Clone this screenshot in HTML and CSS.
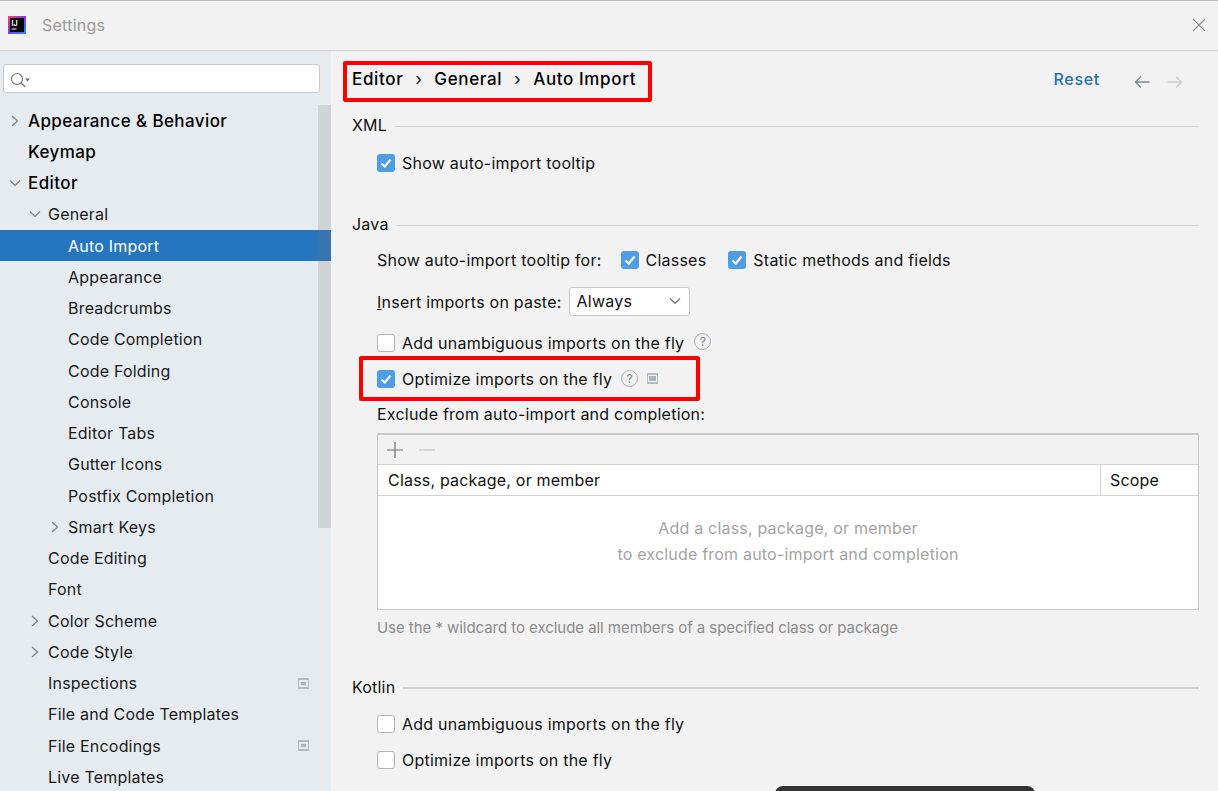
FILE: index.html
```html
<!DOCTYPE html>
<html lang="en">
  <head>
    <title> Settings </title>
    <meta charset="utf-8">
    <link rel="stylesheet" href="styles.css">
  </head>

  <body>
    <div class="window">
      <header class="titlebar">
        <svg class="logo" width="18" height="18" viewBox="0 0 18 18">
          <defs>
            <linearGradient id="frame" x1="0" y1="0" x2="1" y2="1">
              <stop offset="0" stop-color="#ff3d6e"/>
              <stop offset="0.5" stop-color="#7b3fe4"/>
              <stop offset="1" stop-color="#1f8fff"/>
            </linearGradient>
          </defs>
          <rect width="18" height="18" fill="url(#frame)"/>
          <rect x="2" y="2" width="14" height="14" fill="#000"/>
          <text x="3.5" y="9.5" class="logo-text">IJ</text>
          <rect x="3.5" y="12.5" width="5" height="1" fill="#fff"/>
        </svg>
        <span class="window-title">Settings</span>
        <svg class="close" width="14" height="14" viewBox="0 0 14 14">
          <path d="M1 1 L13 13 M13 1 L1 13" stroke="#8c8c8c" stroke-width="1.1" fill="none"/>
        </svg>
      </header>

      <div class="content">
        <aside class="sidebar">
          <div class="search">
            <svg width="22" height="16" viewBox="0 0 22 16">
              <circle cx="7" cy="8" r="5.5" stroke="#6e6e6e" stroke-width="1.1" fill="none"/>
              <path d="M11 12 L15.5 16" stroke="#6e6e6e" stroke-width="1.3"/>
              <path d="M15 7.5 L20 7.5 L17.5 10.5 Z" fill="#6e6e6e"/>
            </svg>
          </div>
          <div class="tree-wrap">
            <ul class="tree">
              <li class="row strong lvl0"><svg class="arrow" width="10" height="12" viewBox="0 0 10 12"><path d="M3 1 L8.5 6 L3 11" /></svg>Appearance &amp; Behavior</li>
              <li class="row strong lvl0">Keymap</li>
              <li class="row strong lvl0"><svg class="arrow" width="12" height="10" viewBox="0 0 12 10"><path d="M1 2.5 L6 7.5 L11 2.5" /></svg>Editor</li>
              <li class="row lvl1"><svg class="arrow" width="12" height="10" viewBox="0 0 12 10"><path d="M1 2.5 L6 7.5 L11 2.5" /></svg>General</li>
              <li class="row lvl2 selected">Auto Import</li>
              <li class="row lvl2">Appearance</li>
              <li class="row lvl2">Breadcrumbs</li>
              <li class="row lvl2">Code Completion</li>
              <li class="row lvl2">Code Folding</li>
              <li class="row lvl2">Console</li>
              <li class="row lvl2">Editor Tabs</li>
              <li class="row lvl2">Gutter Icons</li>
              <li class="row lvl2">Postfix Completion</li>
              <li class="row lvl2"><svg class="arrow" width="10" height="12" viewBox="0 0 10 12"><path d="M3 1 L8.5 6 L3 11" /></svg>Smart Keys</li>
              <li class="row lvl1">Code Editing</li>
              <li class="row lvl1">Font</li>
              <li class="row lvl1"><svg class="arrow" width="10" height="12" viewBox="0 0 10 12"><path d="M3 1 L8.5 6 L3 11" /></svg>Color Scheme</li>
              <li class="row lvl1"><svg class="arrow" width="10" height="12" viewBox="0 0 10 12"><path d="M3 1 L8.5 6 L3 11" /></svg>Code Style</li>
              <li class="row lvl1">Inspections<span class="scope-icon tree-scope"></span></li>
              <li class="row lvl1">File and Code Templates</li>
              <li class="row lvl1">File Encodings<span class="scope-icon tree-scope"></span></li>
              <li class="row lvl1">Live Templates</li>
            </ul>
            <div class="scrollbar"></div>
          </div>
        </aside>

        <main class="main">
          <div class="page-head">
            <div class="crumbs">
              <span>Editor</span><span class="sep">›</span><span>General</span><span class="sep">›</span><span>Auto Import</span>
            </div>
            <a class="reset">Reset</a>
            <svg class="nav" width="16" height="14" viewBox="0 0 16 14">
              <path d="M15.5 7 H1.5 M7 1.5 L1.5 7 L7 12.5" stroke="#7f8b91" stroke-width="1.4" fill="none"/>
            </svg>
            <svg class="nav" width="16" height="14" viewBox="0 0 16 14">
              <path d="M0.5 7 H14.5 M9 1.5 L14.5 7 L9 12.5" stroke="#c9cccf" stroke-width="1.4" fill="none"/>
            </svg>
          </div>

          <div class="section-title sec-xml"><span>XML</span><i></i></div>
          <div class="opt opt-xml">
            <span class="check on"><svg width="18" height="18" viewBox="0 0 18 18"><path d="M4.5 9.5 L7.8 12.5 L13.5 5.5"/></svg></span>
            <span>Show auto-import tooltip</span>
          </div>

          <div class="section-title sec-java"><span>Java</span><i></i></div>
          <div class="opt opt-for">
            <span class="for-label">Show auto-import tooltip for:</span>
            <span class="check on"><svg width="18" height="18" viewBox="0 0 18 18"><path d="M4.5 9.5 L7.8 12.5 L13.5 5.5"/></svg></span>
            <span class="for-item">Classes</span>
            <span class="check on"><svg width="18" height="18" viewBox="0 0 18 18"><path d="M4.5 9.5 L7.8 12.5 L13.5 5.5"/></svg></span>
            <span>Static methods and fields</span>
          </div>
          <div class="opt opt-paste">
            <span><u>I</u>nsert imports on paste:</span>
            <span class="select"><span>Always</span>
              <svg width="12" height="8" viewBox="0 0 12 8"><path d="M1 1.5 L6 6.5 L11 1.5" stroke="#6e6e6e" stroke-width="1.1" fill="none"/></svg>
            </span>
          </div>
          <div class="opt opt-add">
            <span class="check"></span>
            <span>Add unambiguous imports on the fly</span>
            <span class="help help-add">?</span>
          </div>
          <div class="opt opt-optimize">
            <span class="check on"><svg width="18" height="18" viewBox="0 0 18 18"><path d="M4.5 9.5 L7.8 12.5 L13.5 5.5"/></svg></span>
            <span>Optimize imports on the fly</span>
            <span class="help help-opt">?</span>
            <span class="scope-icon"></span>
            <div class="mark"></div>
          </div>
          <div class="opt opt-exclude">Exclude from auto-import and completion:</div>

          <div class="table">
            <div class="table-tools">
              <svg width="16" height="16" viewBox="0 0 16 16"><path d="M8 0 V16 M0 8 H16" stroke="#6e6e6e" stroke-width="1.2"/></svg>
              <svg width="16" height="16" viewBox="0 0 16 16"><path d="M0 8 H16" stroke="#c4c4c4" stroke-width="1.2"/></svg>
            </div>
            <div class="table-head">
              <div class="col-main">Class, package, or member</div>
              <div class="col-scope">Scope</div>
            </div>
            <div class="table-empty">
              <div>Add a class, package, or member</div>
              <div>to exclude from auto-import and completion</div>
            </div>
          </div>
          <div class="hint">Use the * wildcard to exclude all members of a specified class or package</div>

          <div class="section-title sec-kotlin"><span>Kotlin</span><i></i></div>
          <div class="opt opt-k1"><span class="check"></span><span>Add unambiguous imports on the fly</span></div>
          <div class="opt opt-k2"><span class="check"></span><span>Optimize imports on the fly</span></div>
        </main>
      </div>
      <div class="dark-tab"></div>
    </div>
  </body>
</html>
```

FILE: styles.css
```css
html, body {
  margin: 0;
  height: 100%;
  overflow: hidden;
}
body {
  font-family: "Inter", "Liberation Sans", sans-serif;
  font-size: 16px;
  color: #111;
  background: #f2f2f2;
}
.window {
  height: 791px;
  display: flex;
  flex-direction: column;
  overflow: hidden;
  border-top: 1px solid #bdbdbd;
  box-sizing: border-box;
}

/* title bar */
.titlebar {
  height: 50px;
  box-sizing: border-box;
  flex: none;
  display: flex;
  align-items: center;
  padding: 0 12px 2px 8px;
  border-bottom: 1px solid #d1d1d1;
}
.logo-text {
  font-size: 7px;
  font-weight: 700;
  fill: #fff;
}
.window-title {
  margin-left: 16px;
  color: #9a9a9a;
  letter-spacing: 0.25px;
}
.close {
  margin-left: auto;
}

/* left tree */
.content {
  flex: 1;
  display: flex;
  min-height: 0;
}
.sidebar {
  width: 331px;
  flex: none;
  background: #e6ebf0;
}
.search {
  height: 29px;
  margin: 13px 11px 0 3px;
  display: flex;
  align-items: center;
  padding-left: 6px;
  background: #fff;
  border: 1px solid #c9c9c9;
  border-radius: 3px;
  box-sizing: border-box;
}
.tree-wrap {
  position: relative;
  margin-top: 12px;
}
.tree {
  list-style: none;
  margin: 0;
  padding: 0;
}
.row {
  height: 31.25px;
  display: flex;
  align-items: center;
  position: relative;
  letter-spacing: 0.2px;
  color: #1a1a1a;
}
.strong {
  font-weight: 500;
  font-size: 17px;
  letter-spacing: 0.4px;
  color: #000;
}
.lvl0 { padding-left: 28px; }
.lvl1 { padding-left: 48px; }
.lvl2 { padding-left: 68px; }
.selected {
  background: #2675bf;
  color: #fff;
}
.arrow {
  position: absolute;
  margin-left: -19px;
  fill: none;
  stroke: #7f7f7f;
  stroke-width: 1.2;
}
.scrollbar {
  position: absolute;
  top: 0;
  right: 0;
  width: 13px;
  height: 423px;
  background: rgba(120, 120, 120, 0.2);
}
.tree-scope {
  position: absolute;
  right: 22px;
}

/* right pane */
.main {
  flex: 1;
  padding: 0 19px 0 21px;
  min-width: 0;
}
.page-head {
  display: flex;
  align-items: center;
  height: 41px;
  margin-top: 10px;
  padding-right: 16px;
}
.crumbs {
  display: flex;
  align-items: center;
  height: 41px;
  box-sizing: border-box;
  margin-left: -9px;
  padding: 0 12px 5px 5px;
  border: 4px solid #f00;
  border-radius: 2px;
  font-size: 17px;
  font-weight: 500;
  letter-spacing: 0.64px;
  color: #000;
}
.sep {
  width: 31px;
  text-align: center;
  color: #333;
}
.reset {
  margin: 0 34px 5px auto;
  font-weight: 500;
  letter-spacing: 0.7px;
  color: #2470b3;
}
.nav {
  margin-left: 17px;
}
.reset + .nav {
  margin-left: 0;
}

.section-title {
  display: flex;
  align-items: center;
  gap: 8px;
  height: 26px;
  letter-spacing: 0.2px;
}
.section-title i {
  flex: 1;
  height: 1px;
  background: #d1d1d1;
  margin-top: 2px;
}
.sec-kotlin i {
  height: 2px;
}
.sec-xml { margin-top: 10px; }
.sec-java { margin-top: 35px; }
.sec-kotlin { margin-top: 34px; }

.opt {
  display: flex;
  align-items: center;
  height: 26px;
  margin-left: 25px;
  letter-spacing: 0.23px;
  position: relative;
}
.opt-xml { margin-top: 12px; }
.opt-for { margin-top: 10px; }
.opt-paste { margin-top: 16px; }
.opt-add { margin-top: 15px; }
.opt-optimize { margin-top: 10px; }
.opt-exclude { margin-top: 9px; }
.opt-k1 { margin-top: 11px; }
.opt-k2 { margin-top: 10px; }

.check {
  width: 18px;
  height: 18px;
  flex: none;
  margin-right: 7px;
  box-sizing: border-box;
  background: #fff;
  border: 1px solid #b5b5b5;
  border-radius: 3px;
}
.check.on {
  background: #4f9ee3;
  border: none;
}
.check svg {
  display: block;
  fill: none;
  stroke: #fff;
  stroke-width: 2;
}
.for-label { margin-right: 19px; }
.for-item { margin-right: 22px; }

.select {
  display: flex;
  align-items: center;
  justify-content: space-between;
  width: 121px;
  height: 29px;
  margin: -2px 0 0 7px;
  padding: 0 8px 0 7px;
  box-sizing: border-box;
  background: #fff;
  border: 1px solid #c9c9c9;
  border-radius: 3px;
}
.help {
  width: 17px;
  height: 17px;
  box-sizing: border-box;
  border: 1px solid #a8adb0;
  border-radius: 50%;
  color: #8c9295;
  font-size: 12px;
  font-weight: 500;
  display: flex;
  align-items: center;
  justify-content: center;
  letter-spacing: 0;
}
.help-add { margin: -4px 0 0 10px; }
.help-opt { margin: -2px 0 0 9px; }
.scope-icon {
  display: inline-block;
  width: 11px;
  height: 11px;
  box-sizing: border-box;
  background: #a9b4ba;
  border: 1px solid #b2bcc2;
  border-width: 2px 1px;
  box-shadow: inset 0 0 0 2px #e6ebf0;
}
.opt-optimize .scope-icon {
  margin: -2px 0 0 9px;
  box-shadow: inset 0 0 0 1px #f2f2f2;
}
/* annotation box drawn over the row */
.mark {
  position: absolute;
  left: -18px;
  top: -10px;
  width: 341px;
  height: 45px;
  box-sizing: border-box;
  border: 4px solid #f00;
  border-radius: 2px;
}

.table {
  margin: 6px 0 0 25px;
  border: 1px solid #c9c9c9;
  border-top-width: 2px;
  background: #fff;
}
.table-tools {
  height: 29px;
  display: flex;
  align-items: center;
  gap: 16px;
  padding-left: 9px;
  background: #f2f2f2;
  border-bottom: 1px solid #d1d1d1;
}
.table-head {
  display: flex;
  height: 30px;
  align-items: center;
  letter-spacing: 0.2px;
  border-bottom: 1px solid #d1d1d1;
}
.col-main {
  flex: 1;
  padding-left: 10px;
  border-right: 1px solid #d1d1d1;
  line-height: 30px;
}
.col-scope {
  width: 88px;
  padding-left: 9px;
}
.table-empty {
  height: 113px;
  padding-bottom: 23px;
  box-sizing: border-box;
  display: flex;
  flex-direction: column;
  justify-content: center;
  align-items: center;
  color: #a3a3a3;
  line-height: 26px;
  letter-spacing: 0.2px;
}
.hint {
  margin: 6px 0 0 25px;
  height: 24px;
  line-height: 24px;
  font-size: 15px;
  color: #8c8c8c;
  letter-spacing: -0.05px;
}
.dark-tab {
  position: absolute;
  left: 775px;
  top: 786px;
  width: 260px;
  height: 20px;
  background: #333;
  border-radius: 8px 8px 0 0;
}
```
